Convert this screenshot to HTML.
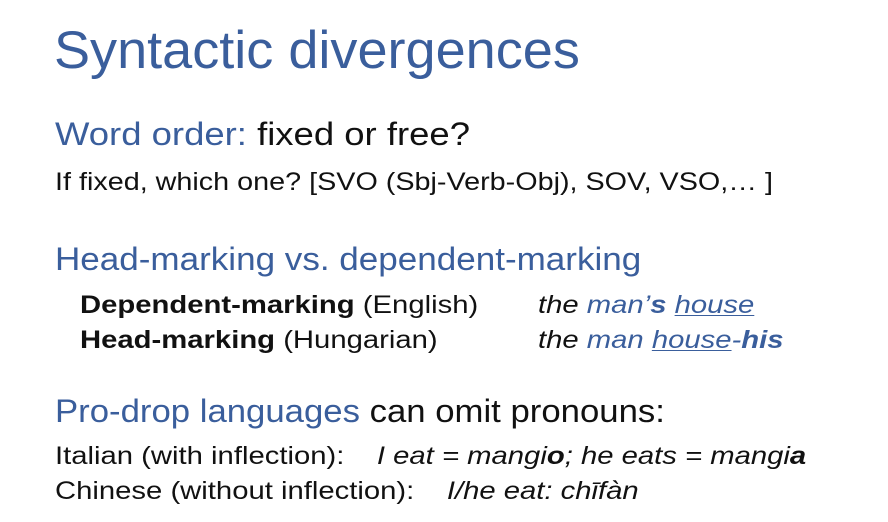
<!DOCTYPE html>
<html><head><meta charset="utf-8"><style>
html,body{margin:0;padding:0;background:#fff;}
body{width:888px;height:522px;position:relative;overflow:hidden;font-family:"Liberation Sans",Arial,sans-serif;color:#111;}
.l{position:absolute;white-space:nowrap;transform-origin:0 0;line-height:1;}
.b{color:#3a5e9c;}
i{font-style:italic;}
u{text-decoration:underline;text-decoration-thickness:1px;text-underline-offset:2px;}
</style></head><body>
<div class="l b" style="left:54px;top:24px;font-size:53px;transform:scaleX(1.02)">Syntactic divergences</div>
<div class="l" style="left:55px;top:118px;font-size:32px;transform:scaleX(1.14)"><span class="b">Word order:</span> fixed or free?</div>
<div class="l" style="left:55px;top:170px;font-size:25px;transform:scaleX(1.15)">If fixed, which one? [SVO (Sbj-Verb-Obj), SOV, VSO,… ]</div>
<div class="l b" style="left:55px;top:243px;font-size:32px;transform:scaleX(1.095)">Head-marking vs. dependent-marking</div>
<div class="l" style="left:80px;top:293px;font-size:25px;transform:scaleX(1.17)"><b>Dependent-marking</b> (English)</div>
<div class="l" style="left:538px;top:293px;font-size:25px;transform:scaleX(1.17)"><i>the <span class="b">man’<b>s</b> <u>house</u></span></i></div>
<div class="l" style="left:80px;top:328px;font-size:25px;transform:scaleX(1.17)"><b>Head-marking</b> (Hungarian)</div>
<div class="l" style="left:538px;top:328px;font-size:25px;transform:scaleX(1.17)"><i>the <span class="b">man <u>house</u>-<b>his</b></span></i></div>
<div class="l" style="left:55px;top:395px;font-size:32px;transform:scaleX(1.085)"><span class="b">Pro-drop languages</span> can omit pronouns:</div>
<div class="l" style="left:55px;top:444px;font-size:25px;transform:scaleX(1.17)">Italian (with inflection):&nbsp;&nbsp;&nbsp;&nbsp;<i>I eat = mangi<b>o</b>; he eats = mangi<b>a</b></i></div>
<div class="l" style="left:55px;top:479px;font-size:25px;transform:scaleX(1.17)">Chinese (without inflection):&nbsp;&nbsp;&nbsp;&nbsp;<i>I/he eat: chīfàn</i></div>
</body></html>
